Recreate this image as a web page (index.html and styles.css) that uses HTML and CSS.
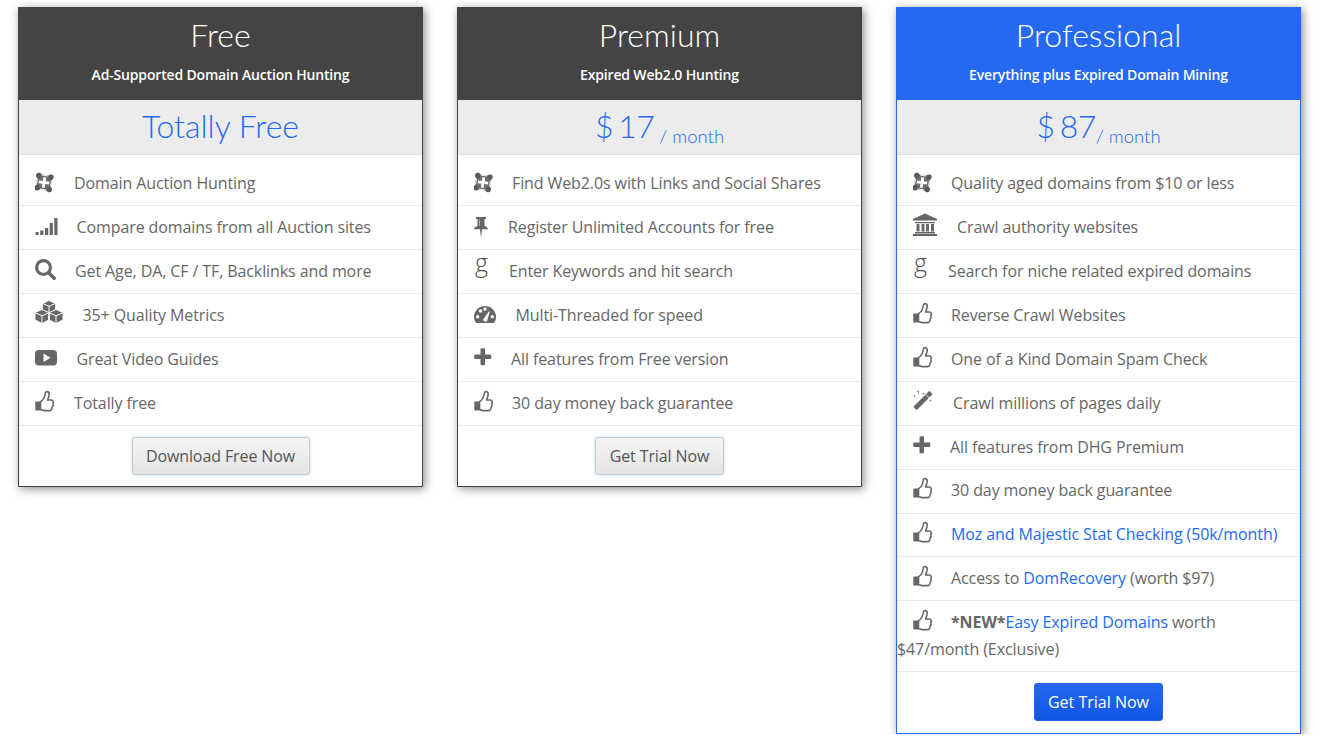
FILE: index.html
```html
<!DOCTYPE html>
<html lang="en">
<head>
<meta charset="utf-8">
<title>Pricing</title>
<link rel="stylesheet" href="styles.css">
</head>
<body>
<svg class="defs" xmlns="http://www.w3.org/2000/svg">
  <symbol id="i-crop" viewBox="0 -4 30 28">
    <g transform="rotate(8 9 10.5)">
      <path d="M1.500 3h15v15h-15z" fill="#6e6e6e"/>
      <g fill="#5a5a5a">
        <circle cx="2.800" cy="4.300" r="2.700"/>
        <circle cx="15.200" cy="4.300" r="2.700"/>
        <circle cx="2.800" cy="16.700" r="2.700"/>
        <circle cx="15.200" cy="16.700" r="2.700"/>
      </g>
      <path d="M7.600 5.300h2.800v3.800h3.800v2.800h-3.800v3.800H7.600v-3.800H3.800V9.100h3.800z" fill="#fff"/>
      <path d="M6 3h6v.9H6zM6 17.100h6v.9H6zM1.500 7.500h.9v6h-.9zM15.600 7.500h.9v6h-.9z" fill="#fff"/>
    </g>
  </symbol>
  <symbol id="i-signal" viewBox="0 -4 30 28">
    <path d="M0.500 16h3.200v3H0.500zM5.200 14.500h3.200V19H5.200zM10 12h3.200v7H10zM14.700 7h3.200v12h-3.200zM19.300 2h3.200v17h-3.200z" fill="#666"/>
  </symbol>
  <symbol id="i-search" viewBox="0 -4 30 28">
    <circle cx="8.500" cy="7.500" r="6.900" fill="none" stroke="#666" stroke-width="3.100"/>
    <path d="M13.500 12.500l5.700 5.700" stroke="#666" stroke-width="3.600" stroke-linecap="round"/>
  </symbol>
  <symbol id="i-cubes" viewBox="0 -4 30 28">
    <g fill="#666" stroke="#fff" stroke-width="1" stroke-linejoin="round">
      <path d="M14 -3.500l6.700 3v7.500L14 10l-6.700-3v-7.500z"/>
      <path d="M7 5.500l6.700 3v7.500L7 19.500 0 16V8.500z"/>
      <path d="M21 5.500l7 3V16l-7 3.500-6.700-3.500V8.500z"/>
    </g>
    <path d="M7.800 -.5L14 2.300l6.200-2.800M14 2.300V9.500M.8 9L7 11.800 13.200 9M7 11.800V19M14.800 9L21 11.800 27.200 9M21 11.800V19" fill="none" stroke="#fff" stroke-width="1"/>
  </symbol>
  <symbol id="i-youtube" viewBox="0 -4 30 28">
    <rect x="0" y="2" width="22" height="15.500" rx="4" fill="#666"/>
    <path d="M8.500 5.500l7 4.300-7 4.200z" fill="#fff"/>
  </symbol>
  <symbol id="i-thumb" viewBox="0 -4 30 28">
    <path d="M0.300 9.500h5v9h-5z" fill="#666"/>
    <path d="M5.500 9.800C8 8.300 9.800 5 10.300 1.500 10.500-1.300 14.400-1 14.200 2.500 14 4.800 13.200 6.200 12.600 8H16.300C18.300 8 18.900 10 17.900 11.500 18.500 13 18 14.500 17 15.500 17.100 17.200 16 18.600 14.500 18.600H9C7.500 18.600 6.800 17.600 5.500 17.600z" fill="none" stroke="#666" stroke-width="1.600" stroke-linejoin="round"/>
  </symbol>
  <symbol id="i-pin" viewBox="0 -4 30 28">
    <path d="M2 1h10v2h-1.500v7c1.800 .7 3.500 1.500 3.500 3.200H8l-.8 7.300h-.4L6 13.200H0C0 11.500 1.700 10.700 3.500 10V3H2z" fill="#666"/>
    <path d="M5 3.500h1v6.500H5z" fill="#aaa"/>
  </symbol>
  <symbol id="i-gauge" viewBox="0 -4 30 28">
    <path d="M0 13A11 11 0 0 1 22 13C22 15.500 21 17.500 20 19H2C1 17.500 0 15.500 0 13Z" fill="#666"/>
    <g fill="#fff">
      <circle cx="3.700" cy="12.800" r="1.700"/>
      <circle cx="6.500" cy="7" r="1.700"/>
      <circle cx="11" cy="5" r="1.700"/>
      <circle cx="18.300" cy="12.800" r="1.700"/>
      <path d="M9.200 15.500a2.200 2.200 0 0 0 4 1.200L15.800 7.500l-.8-.2z"/>
    </g>
  </symbol>
  <symbol id="i-plus" viewBox="0 -4 30 28">
    <path d="M6.500 1.200a1 1 0 0 1 1-1h2.500a1 1 0 0 1 1 1V6.500h5.300a1 1 0 0 1 1 1V10a1 1 0 0 1-1 1H11v5.300a1 1 0 0 1-1 1H7.500a1 1 0 0 1-1-1V11H1.200a1 1 0 0 1-1-1V7.500a1 1 0 0 1 1-1H6.500z" fill="#666"/>
  </symbol>
  <symbol id="i-bank" viewBox="0 -4 30 28">
    <path d="M12-2.500L24 3v1.500H0V3zM2 6h20v1.300H2zM3.500 8h3v7.500h-3zM8.500 8h3v7.500h-3zM13 8h3v7.500h-3zM18 8h3v7.500h-3zM2 16h20v1.500H2zM0 18h24v2H0z" fill="#666"/>
  </symbol>
  <symbol id="i-magic" viewBox="0 -4 30 28">
    <path d="M2 16.500L18 .5" stroke="#666" stroke-width="4.600"/>
    <path d="M13.200 2.900l2.800 2.800" stroke="#fff" stroke-width=".9"/>
    <path d="M5.500-2l.6 1.900L8-.5 6.100.1 5.500 2 4.900.1 3-.5l1.900-.4zM10.500 0l.4 1.100L12 1.500l-1.100.4-.4 1.100-.4-1.100L9 1.500l1.100-.4zM1.500 2.500l.4 1.100 1.100.4-1.100.4-.4 1.100-.4-1.100L0 4l1.100-.4zM17.500 7l.4 1.100 1.100.4-1.100.4-.4 1.100-.4-1.100-1.100-.4 1.100-.4z" fill="#888"/>
  </symbol>
</svg>

<main class="cards">
  <section class="card">
    <header class="card-head">
      <h2 class="plan">Free</h2>
      <p class="tagline">Ad-Supported Domain Auction Hunting</p>
    </header>
    <div class="price"><span class="amount">Totally Free</span></div>
    <ul class="features">
      <li><span class="ic w39"><svg><use href="#i-crop"/></svg></span>Domain Auction Hunting</li>
      <li><span class="ic w41"><svg><use href="#i-signal"/></svg></span>Compare domains from all Auction sites</li>
      <li><span class="ic w40"><svg><use href="#i-search"/></svg></span>Get Age, DA, CF / TF, Backlinks and more</li>
      <li><span class="ic w47"><svg><use href="#i-cubes"/></svg></span>35+ Quality Metrics</li>
      <li><span class="ic w41"><svg><use href="#i-youtube"/></svg></span>Great Video Guides</li>
      <li><span class="ic w39"><svg><use href="#i-thumb"/></svg></span>Totally free</li>
    </ul>
    <footer class="card-foot"><a class="btn btn-free" href="#">Download Free Now</a></footer>
  </section>

  <section class="card">
    <header class="card-head">
      <h2 class="plan">Premium</h2>
      <p class="tagline">Expired Web2.0 Hunting</p>
    </header>
    <div class="price"><span class="amount amount-num">$ 17</span><span class="per">/ month</span></div>
    <ul class="features">
      <li><span class="ic w38"><svg><use href="#i-crop"/></svg></span>Find Web2.0s with Links and Social Shares</li>
      <li><span class="ic w34"><svg><use href="#i-pin"/></svg></span>Register Unlimited Accounts for free</li>
      <li><span class="ic w35"><span class="g-icon">g</span></span>Enter Keywords and hit search</li>
      <li><span class="ic w41"><svg><use href="#i-gauge"/></svg></span>Multi-Threaded for speed</li>
      <li><span class="ic w37"><svg><use href="#i-plus"/></svg></span>All features from Free version</li>
      <li><span class="ic w38"><svg><use href="#i-thumb"/></svg></span>30 day money back guarantee</li>
    </ul>
    <footer class="card-foot"><a class="btn btn-trial" href="#">Get Trial Now</a></footer>
  </section>

  <section class="card card-pro">
    <header class="card-head">
      <h2 class="plan">Professional</h2>
      <p class="tagline">Everything plus Expired Domain Mining</p>
    </header>
    <div class="price"><span class="amount amount-num">$ 87</span><span class="per per-tight">/ month</span></div>
    <ul class="features">
      <li><span class="ic w38"><svg><use href="#i-crop"/></svg></span>Quality aged domains from $10 or less</li>
      <li><span class="ic w44"><svg><use href="#i-bank"/></svg></span>Crawl authority websites</li>
      <li><span class="ic w35"><span class="g-icon">g</span></span>Search for niche related expired domains</li>
      <li><span class="ic w38"><svg><use href="#i-thumb"/></svg></span>Reverse Crawl Websites</li>
      <li><span class="ic w38"><svg><use href="#i-thumb"/></svg></span>One of a Kind Domain Spam Check</li>
      <li><span class="ic w40"><svg><use href="#i-magic"/></svg></span>Crawl millions of pages daily</li>
      <li><span class="ic w37"><svg><use href="#i-plus"/></svg></span>All features from DHG Premium</li>
      <li><span class="ic w38"><svg><use href="#i-thumb"/></svg></span>30 day money back guarantee</li>
      <li><span class="ic w38"><svg><use href="#i-thumb"/></svg></span><a href="#">Moz and Majestic Stat Checking (50k/month)</a></li>
      <li><span class="ic w38"><svg><use href="#i-thumb"/></svg></span>Access to <a href="#">DomRecovery</a> (worth $97)</li>
      <li><span class="ic w38"><svg><use href="#i-thumb"/></svg></span><strong>*NEW*</strong><a href="#">Easy Expired Domains</a> worth $47/month (Exclusive)</li>
    </ul>
    <footer class="card-foot"><a class="btn btn-primary" href="#">Get Trial Now</a></footer>
  </section>
</main>
</body>
</html>
```

FILE: styles.css
```css
* { box-sizing: border-box; }

html, body { margin: 0; padding: 0; background: #fff; }

body {
  font-family: "Open Sans", "Liberation Sans", sans-serif;
  font-size: 16px;
  color: #666;
}

.defs { display: none; }

.cards {
  display: flex;
  align-items: flex-start;
  gap: 34px;
  padding: 7px 0 0 18px;
}

.card {
  width: 405px;
  flex: none;
  background: #fff;
  border: 1px solid #444;
  box-shadow: 2px 2px 9px rgba(0, 0, 0, .45);
}

.card-head {
  height: 93px;
  margin: -1px -1px 0;
  padding-top: 8px;
  background: #444;
  color: #fff;
  text-align: center;
}

.plan {
  margin: 0;
  font-family: Lato, "Liberation Sans", sans-serif;
  font-size: 32px;
  font-weight: 300;
  line-height: 40px;
}

.tagline {
  margin: 10px 0 0;
  font-size: 14px;
  font-weight: 600;
  letter-spacing: -.17px;
  line-height: 20px;
}

.price {
  height: 55px;
  background: #ececec;
  border-bottom: 1px solid #ddd;
  color: #2569f0;
  font-family: Lato, "Liberation Sans", sans-serif;
  font-weight: 300;
  text-align: center;
  line-height: 52px;
}

.amount { font-size: 32px; }
.amount-num { letter-spacing: -.5px; word-spacing: -3px; }

.per {
  margin-left: 5px;
  font-size: 18.5px;
  line-height: 1;
  vertical-align: -5px;
}
.per-tight { margin-left: 0; }

.features {
  margin: 0;
  padding: 7.4px 0 0;
  list-style: none;
}

.features li {
  padding: 7.85px 0;
  line-height: 27.2px;
  letter-spacing: -.1px;
  border-bottom: 1px dotted #d5d5d5;
}

.features a { color: #2569f0; text-decoration: none; }
.features strong { font-weight: 700; }

.ic {
  display: inline-block;
  height: 20px;
  margin-left: 16px;
  vertical-align: top;
}

.ic svg {
  display: block;
  width: 30px;
  height: 28px;
  margin-top: -2px;
  overflow: visible;
}

.g-icon {
  display: block;
  margin-top: -10px;
  margin-left: 1px;
  font-family: "Open Sans", "Liberation Serif", serif;
  font-size: 25px;
  font-weight: 300;
  line-height: 28px;
  color: #555;
}

.w34 { width: 34px; }
.w35 { width: 35px; }
.w37 { width: 37px; }
.w38 { width: 38px; }
.w39 { width: 39px; }
.w40 { width: 40px; }
.w41 { width: 41.5px; }
.w44 { width: 44px; }
.w47 { width: 47.5px; }

.card-foot {
  display: flex;
  justify-content: center;
  padding: 11px 0 11.4px;
}

.btn {
  display: block;
  height: 38px;
  border: 1px solid #c6ccd2;
  border-radius: 3px;
  background: linear-gradient(#f5f5f5, #e4e4e4);
  box-shadow: 0 0 3px rgba(120, 180, 220, .5);
  color: #555;
  letter-spacing: -.1px;
  line-height: 36px;
  text-align: center;
  text-decoration: none;
}

.btn-free { width: 178px; }
.btn-trial { width: 129px; }

.btn-primary {
  width: 129px;
  border-color: #1f63ee;
  background: linear-gradient(#2569f0, #1055e6);
  box-shadow: none;
  color: #fff;
  font-weight: 500;
  letter-spacing: 0;
}

.card-pro { border-color: #2569f0; }
.card-pro .card-head { background: #2569f0; }
```
